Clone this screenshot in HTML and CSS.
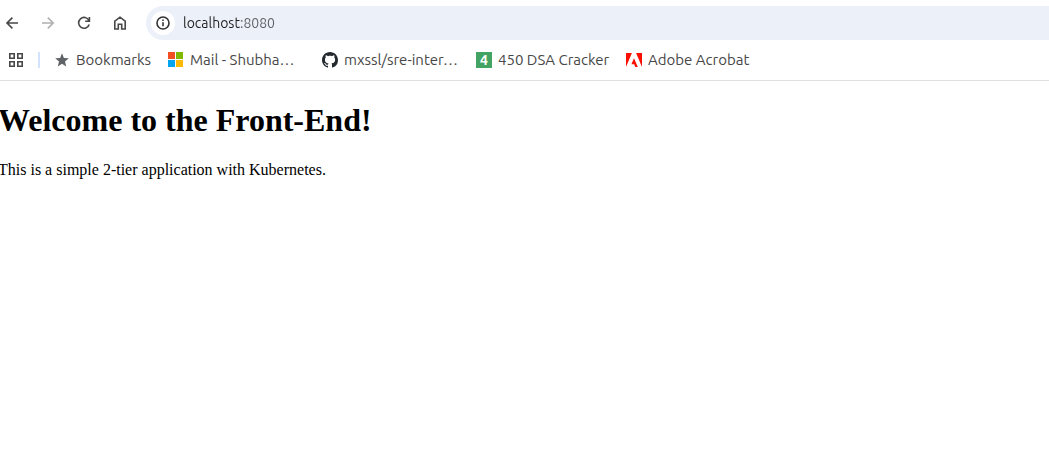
FILE: index.html
```html
<!DOCTYPE html>
<html lang="en">
<head>
<meta charset="utf-8">
<title>localhost:8080</title>
<link rel="stylesheet" href="styles.css">
</head>
<body>
<header class="chrome">
  <div class="toolbar">
    <nav class="nav" aria-label="Navigation">
      <button class="nav-button" aria-label="Back"><svg viewBox="0 0 16 16"><path d="M8.4 2.6 3 8l5.4 5.4M3.2 8H14"/></svg></button>
      <button class="nav-button" aria-label="Forward" disabled><svg viewBox="0 0 16 16"><path d="M7.8 2.6 13.2 8l-5.4 5.4M13 8H2"/></svg></button>
      <button class="nav-button" aria-label="Reload"><svg viewBox="0 0 16 16"><path d="M12.9 5.5A5.4 5.4 0 1 0 13.2 9.4M13.4 2v4.2H9.2"/></svg></button>
      <button class="nav-button" aria-label="Home"><svg viewBox="0 0 16 16"><path d="M2.8 14V6.2L8 2.2l5.2 4V14H9.7V9.2H6.3V14Z"/></svg></button>
    </nav>
    <div class="omnibox">
      <button class="site-info" aria-label="View site information"><svg viewBox="0 0 16 16"><circle cx="8" cy="8" r="6"/><path d="M8 7.2v4M8 4.6v1.5"/></svg></button>
      <input class="address" type="text" value="localhost:8080" aria-label="Address" spellcheck="false">
    </div>
  </div>
  <nav class="bookmarks" aria-label="Bookmarks bar">
    <button class="apps" aria-label="Tab groups"><svg viewBox="0 0 14 14"><path d="M.8.8h4.4v4.4H.8ZM8.8.8h4.4v4.4H8.8ZM.8 8.8h4.4v4.4H.8ZM8.8 8.8h4.4v4.4H8.8Z"/></svg></button>
    <span class="divider"></span>
    <a class="bookmark" href="#"><svg class="favicon" viewBox="0 0 16 16"><path fill="#5f6368" d="m8 1.3 1.9 4.6 4.9.4-3.8 3.2 1.2 4.9L8 11.8l-4.2 2.6L5 9.5 1.2 6.3l4.9-.4Z"/></svg><span class="label label-short">Bookmarks</span></a>
    <a class="bookmark" href="#"><svg class="favicon" viewBox="0 0 16 16"><path fill="#f25022" d="M0 0h7v7H0Z"/><path fill="#7fba00" d="M8 0h7v7H8Z"/><path fill="#00a4ef" d="M0 8h7v7H0Z"/><path fill="#ffb900" d="M8 8h7v7H8Z"/></svg><span class="label label-long">Mail - Shubha…</span></a>
    <a class="bookmark" href="#"><svg class="favicon" viewBox="0 0 16 16"><path fill="#24292f" d="M8 0C3.58 0 0 3.58 0 8c0 3.54 2.29 6.53 5.47 7.59.4.07.55-.17.55-.38 0-.19-.01-.82-.01-1.49-2.01.37-2.53-.49-2.69-.94-.09-.23-.48-.94-.82-1.13-.28-.15-.68-.52-.01-.53.63-.01 1.08.58 1.23.82.72 1.21 1.87.87 2.33.66.07-.52.28-.87.51-1.07-1.78-.2-3.64-.89-3.64-3.95 0-.87.31-1.59.82-2.15-.08-.2-.36-1.02.08-2.12 0 0 .67-.21 2.2.82.64-.18 1.32-.27 2-.27s1.36.09 2 .27c1.53-1.04 2.2-.82 2.2-.82.44 1.1.16 1.92.08 2.12.51.56.82 1.27.82 2.15 0 3.07-1.87 3.75-3.65 3.95.29.25.54.73.54 1.48 0 1.07-.01 1.93-.01 2.2 0 .21.15.46.55.38A8.01 8.01 0 0 0 16 8c0-4.42-3.58-8-8-8Z"/></svg><span class="label label-long">mxssl/sre-inter…</span></a>
    <a class="bookmark" href="#"><span class="favicon tile">4</span><span class="label label-mid">450 DSA Cracker</span></a>
    <a class="bookmark" href="#"><svg class="favicon" viewBox="0 0 16 16"><path fill="#fa0f00" d="M0 1h5.9L0 15ZM10.1 1H16v14ZM8 6.2 11.8 15H9.3L8.2 12.2H5.4Z"/></svg><span class="label">Adobe Acrobat</span></a>
  </nav>
</header>
<main class="page">
  <h1 class="title">Welcome to the Front-End!</h1>
  <p class="text">This is a simple 2-tier application with Kubernetes.</p>
</main>
</body>
</html>
```
FILE: styles.css
```css
* { box-sizing: border-box; }

body {
  margin: 0;
  background: #fff;
}

button {
  padding: 0;
  border: 0;
  background: none;
}

.chrome {
  font-family: Ubuntu, "Noto Sans", sans-serif;
  border-bottom: 1px solid #dfdfdf;
}

.toolbar {
  display: flex;
  gap: 14px;
  padding-top: 6px;
}

.nav {
  display: flex;
  align-items: center;
  gap: 12px;
}

.nav-button {
  display: grid;
  place-items: center;
  width: 24px;
  height: 24px;
  color: #474747;
}

.nav-button:disabled { color: #b0b0b0; }

.nav-button svg,
.site-info svg {
  width: 16px;
  height: 16px;
  fill: none;
  stroke: currentColor;
  stroke-width: 1.6;
}

.omnibox {
  display: flex;
  flex: 1;
  align-items: center;
  gap: 8px;
  height: 34px;
  padding-left: 5px;
  border-radius: 17px 0 0 17px;
  background: #ecf0f9;
}

.site-info {
  display: grid;
  place-items: center;
  width: 24px;
  height: 24px;
  border-radius: 50%;
  background: #fff;
  color: #333;
}

/* The host reads darker than the port that follows it. */
.address {
  flex: 1;
  min-width: 0;
  padding: 0;
  border: 0;
  outline: 0;
  background: linear-gradient(to right, #1f1f1f 58px, #5c5f63 58px);
  -webkit-background-clip: text;
  background-clip: text;
  color: transparent;
  caret-color: #1f1f1f;
  font: 14px/20px Ubuntu, "Noto Sans", sans-serif;
}

.bookmarks {
  display: flex;
  align-items: center;
  height: 40px;
  padding-left: 9px;
}

.apps {
  display: grid;
  width: 14px;
  height: 14px;
}

.apps svg {
  fill: none;
  stroke: #474747;
  stroke-width: 1.6;
}

.divider {
  width: 2px;
  height: 16px;
  margin: 0 14px 0 15px;
  background: #d3e3fd;
}

.bookmark {
  display: flex;
  align-items: center;
  gap: 6px;
  margin-right: 16px;
  color: #474747;
  font-size: 15px;
  line-height: 20px;
  text-decoration: none;
  white-space: nowrap;
}

.favicon {
  flex: none;
  width: 16px;
  height: 16px;
}

.tile {
  background: #43a362;
  color: #fff;
  font-size: 14px;
  font-weight: 700;
  line-height: 16px;
  text-align: center;
}

.label-short { width: 76px; }
.label-mid { width: 112px; }
.label-long { width: 116px; }

/* The text begins just past the left edge of the window. */
.page {
  margin-left: -2px;
  padding-top: 21px;
  color: #000;
  font-family: "Liberation Serif", "Times New Roman", serif;
}

.title {
  margin: 0 0 22px;
  font-size: 32px;
  line-height: 37px;
}

.text {
  margin: 0;
  font-size: 16px;
  line-height: 18px;
}
```
